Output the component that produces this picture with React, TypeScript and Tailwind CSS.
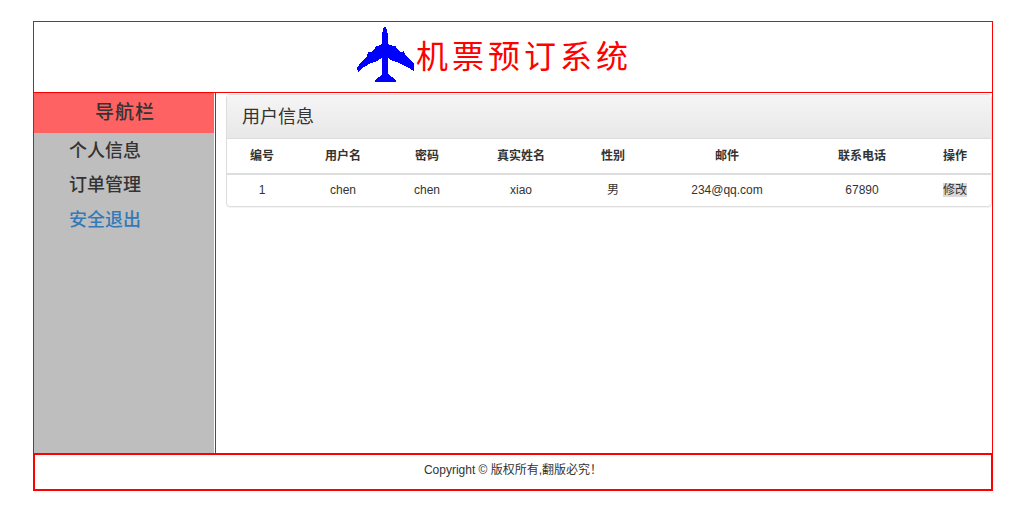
const sans = "font-['Liberation_Sans','Noto_Sans_CJK_SC',sans-serif]";
const serif = "font-['Liberation_Serif','Noto_Sans_CJK_SC',serif]";

const columns = [
  { label: "编号", value: "1", width: "w-[70px]" },
  { label: "用户名", value: "chen", width: "w-[92px]" },
  { label: "密码", value: "chen", width: "w-[76px]" },
  { label: "真实姓名", value: "xiao", width: "w-[112px]" },
  { label: "性别", value: "男", width: "w-[72px]" },
  { label: "邮件", value: "234@qq.com", width: "w-[156px]" },
  { label: "联系电话", value: "67890", width: "w-[114px]" },
];

function Plane() {
  return (
    <svg width="58" height="56" viewBox="0 0 58 56" shapeRendering="crispEdges" className="mb-[5px] shrink-0">
      <path
        fill="#0000ff"
        d="M27 0L29 0L30 3L31 8L31 17L36 19L39 19L40 22L44 25L47 24L48 28L53 32L57 37L57 44L50 40L42 36L36 34L31 31L31 47L35 50L39 53L39 55L18 55L18 53L22 50L25 47L25 31L20 34L14 36L7 40L1 45L0 41L4 35L10 30L11 25L14 25L18 22L19 19L21 19L25 17L25 8L26 3Z"
      />
    </svg>
  );
}

export default function App() {
  return (
    <div className={`${sans} min-h-[515px] bg-white pt-[21px] text-[12px] text-[#333]`}>
      <div className="ml-[33px] flex w-[960px] flex-col border border-b-0 border-[#ff0000]">
        <header className="flex h-[71px] items-center border-b border-[#ff0000] pl-[323px]">
          <Plane />
          <span className={`${serif} ml-px text-[32px] leading-none tracking-[4px] text-[#ff0000]`}>
            机票预订系统
          </span>
        </header>

        <div className="flex h-[360px]">
          <aside className={`${serif} mr-px w-[180px] bg-[#bebebe] text-[18px] font-medium`}>
            <div className="flex h-[40px] items-center justify-center bg-[#ff6262] pl-[2px] pt-px text-[19px] tracking-[1px]">
              导航栏
            </div>
            <ul className="pl-[35px]">
              <li className="flex h-[35px] items-center pt-px">个人信息</li>
              <li className="flex h-[35px] items-center">订单管理</li>
              <li className="flex h-[35px] items-center text-[#337ab7]">安全退出</li>
            </ul>
          </aside>

          <main className="flex-1 border-l border-[#ff0000] pl-[10px] pt-px">
            <div className="rounded-[4px] border border-[#ddd] shadow-[0_1px_1px_rgba(0,0,0,0.05)]">
              <div className="flex h-[44px] items-center border-b border-[#ddd] bg-gradient-to-b from-[#f5f5f5] to-[#e8e8e8] px-[15px] text-[18px] leading-none">
                用户信息
              </div>
              <table className="w-full table-fixed border-collapse text-center">
                <thead>
                  <tr className="h-[35px] border-b-2 border-[#ddd] font-bold">
                    {columns.map((c) => (
                      <th key={c.label} className={c.width}>{c.label}</th>
                    ))}
                    <th>操作</th>
                  </tr>
                </thead>
                <tbody>
                  <tr className="h-[32px]">
                    {columns.map((c) => (
                      <td key={c.label} className="pb-px">{c.value}</td>
                    ))}
                    <td className="pb-px">
                      <span className="bg-[#d9d9d9]">修改</span>
                    </td>
                  </tr>
                </tbody>
              </table>
            </div>
          </main>
        </div>
      </div>

      <footer className="ml-[33px] flex h-[38px] w-[960px] items-center justify-center border-2 border-[#ff0000] pb-[5px]">
        Copyright © 版权所有,翻版必究！
      </footer>
    </div>
  );
}
